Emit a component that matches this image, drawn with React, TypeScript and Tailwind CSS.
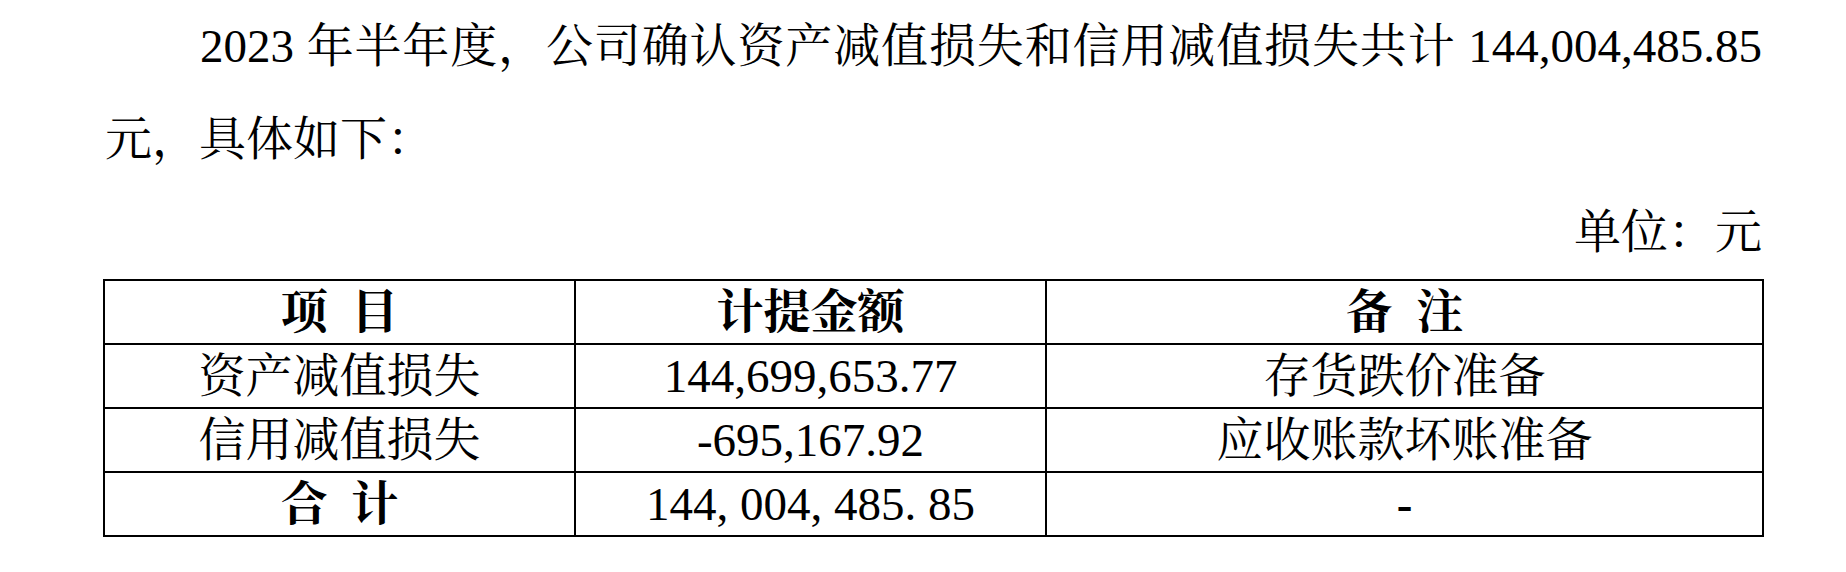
import React from 'react'

const FONT = "font-['Liberation_Serif','Noto_Serif_CJK_SC','Noto_Sans_CJK_SC',serif]"

type Row = { item: string; amount: React.ReactNode; note: string; bold?: boolean }

// SimSun-style half-width punctuation in the total line: every glyph takes half an em
function HalfWidth({ text }: { text: string }) {
  return (
    <>
      {text.split('').map((c, i) => (
        <span key={i} className={`inline-block w-[0.5em] ${/\d/.test(c) ? 'text-center' : 'text-left'}`}>{c}</span>
      ))}
    </>
  )
}

const ROWS: Row[] = [
  { item: '资产减值损失', amount: '144,699,653.77', note: '存货跌价准备' },
  { item: '信用减值损失', amount: '-695,167.92', note: '应收账款坏账准备' },
  { item: '合 计', amount: <HalfWidth text="144,004,485.85" />, note: '-', bold: true },
]

export default function App() {
  return (
    <div className={`min-h-[572px] w-[1846px] bg-white text-black ${FONT} text-[47px] leading-[93px]`}>
      <div className="ml-[105px] w-[1657px]">
        <p className="indent-[95px] [text-align-last:justify] whitespace-nowrap">
          2023 年半年度，公司确认资产减值损失和信用减值损失共计 144,004,485.85
        </p>
        <p>元，具体如下：</p>
        <p className="text-right">单位：元</p>
      </div>

      <table className="ml-[103px] table-fixed border-collapse border-2 border-black leading-none [word-spacing:12px]">
        <colgroup>
          <col className="w-[471px]" />
          <col className="w-[471px]" />
          <col className="w-[717px]" />
        </colgroup>
        <thead>
          <tr className="h-[64px]">
            <th className="border-2 border-black text-center font-bold">项 目</th>
            <th className="border-2 border-black text-center font-bold">计提金额</th>
            <th className="border-2 border-black text-center font-bold">备 注</th>
          </tr>
        </thead>
        <tbody>
          {ROWS.map((r) => (
            <tr key={r.item} className="h-[64px]">
              <td className={`border-2 border-black text-center ${r.bold ? 'font-bold' : ''}`}>{r.item}</td>
              <td className="border-2 border-black text-center">{r.amount}</td>
              <td className={`border-2 border-black text-center ${r.bold ? 'font-bold' : ''}`}>{r.note}</td>
            </tr>
          ))}
        </tbody>
      </table>
    </div>
  )
}
